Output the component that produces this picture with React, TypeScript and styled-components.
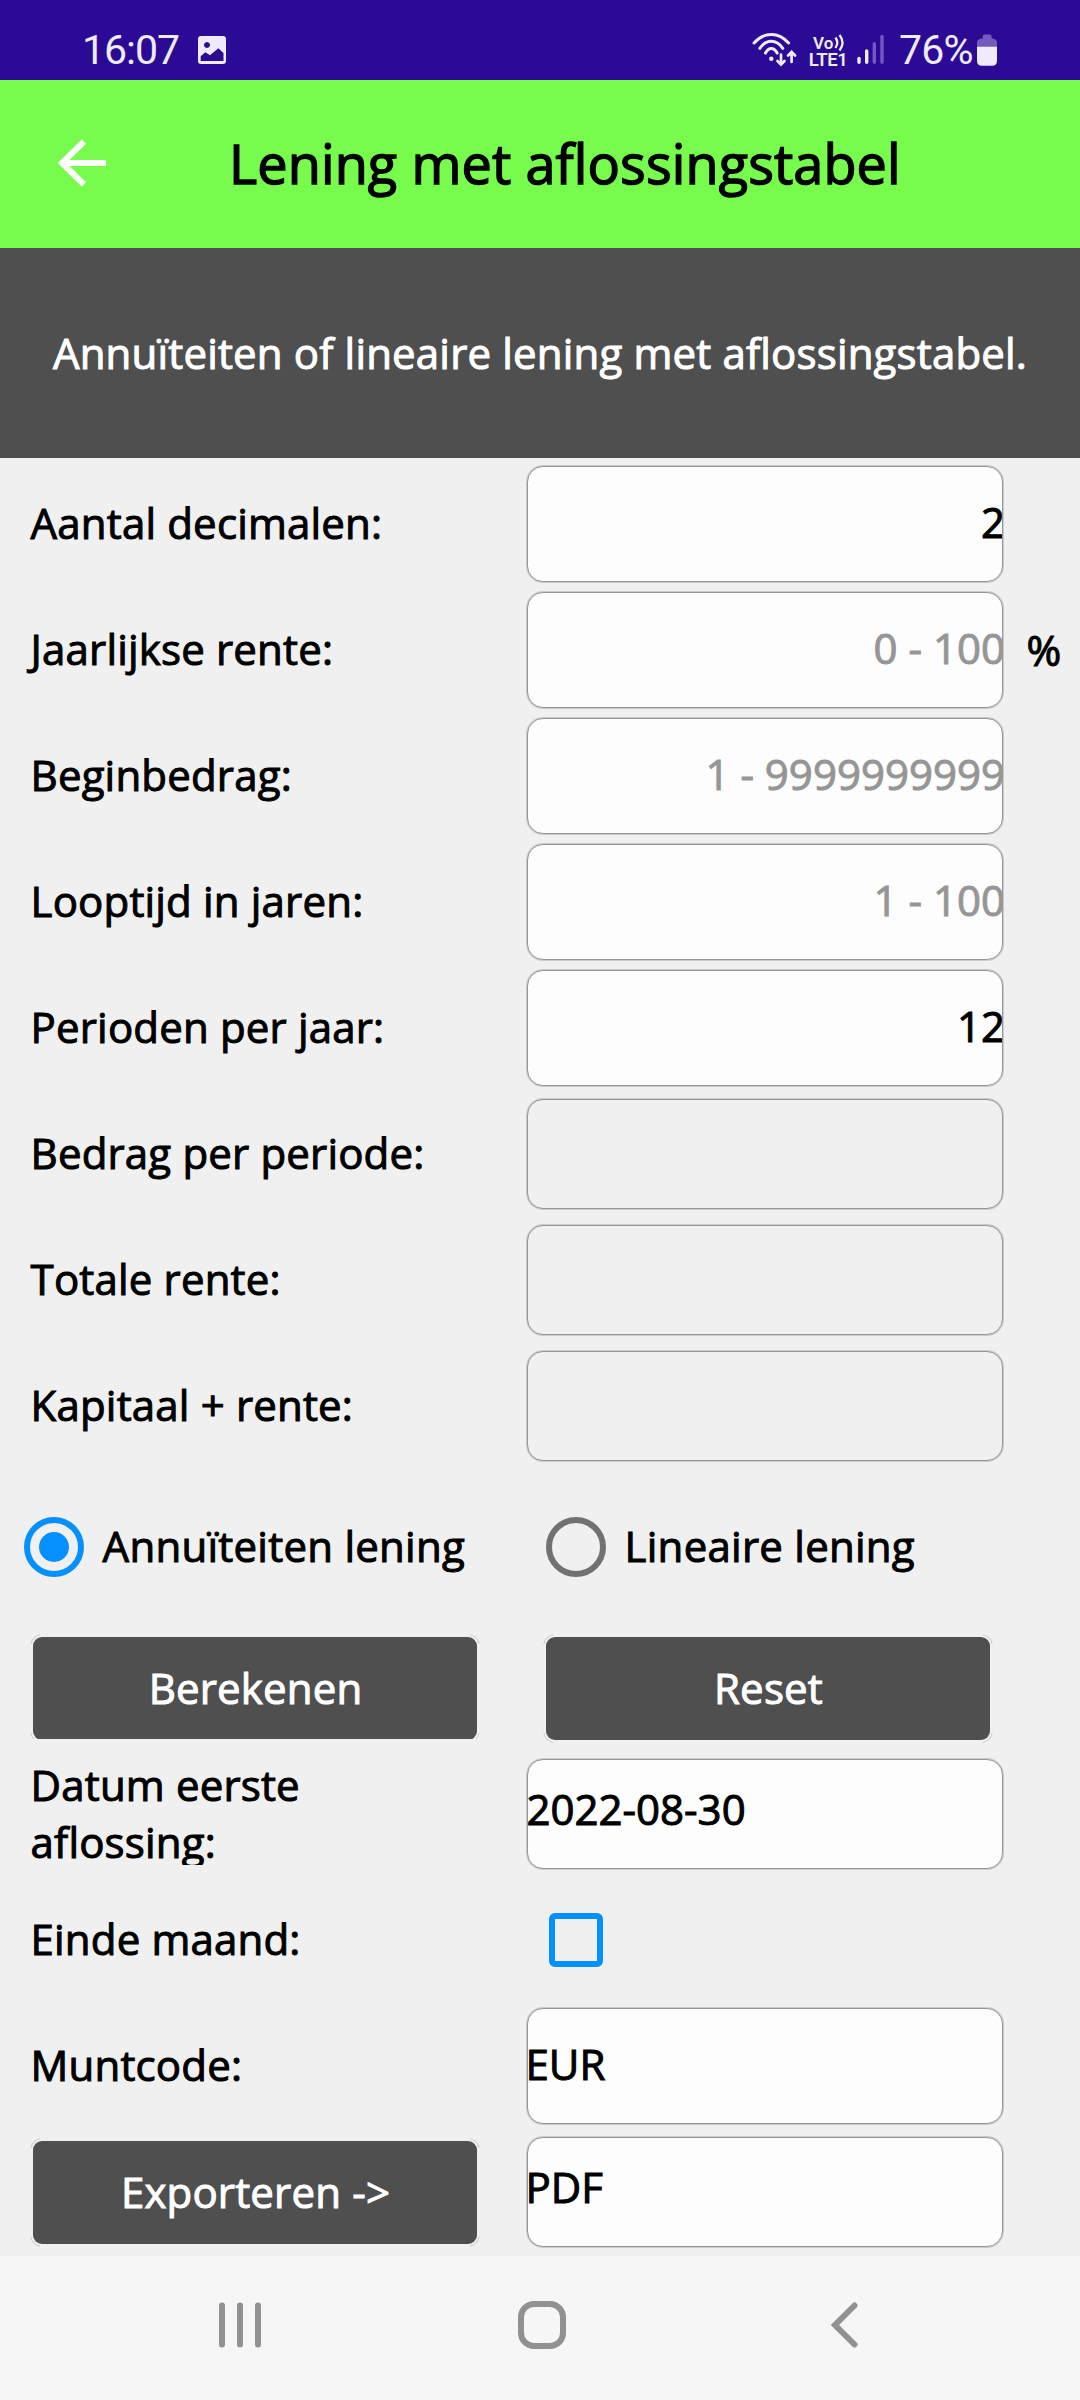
import React from "react";
import styled, { createGlobalStyle } from "styled-components";

const Global = createGlobalStyle`
  * { box-sizing: border-box; }
  html, body { margin: 0; padding: 0; background: #f0f0f0; }
  body { font-family: "Open Sans", "Noto Sans", sans-serif; color: #000; }
`;

const Screen = styled.div`
  width: 1080px;
  height: 2400px;
  display: flex;
  flex-direction: column;
  background: #f0f0f0;
  font-size: 42px;
  line-height: 57px;
  letter-spacing: 0.17px;
  -webkit-text-stroke: 1px currentColor;
  overflow: hidden;
`;

const StatusBar = styled.div`
  height: 80px;
  flex: none;
  background: #2b0a95;
  display: flex;
  align-items: flex-start;
  padding: 0 82px;
  font-family: Roboto, sans-serif;
  font-size: 41px;
  line-height: 48px;
  letter-spacing: 0;
  color: #efebfa;
  -webkit-text-stroke: 0;
`;
const Clock = styled.div`
  width: 116px;
  padding-top: 26px;
  letter-spacing: -1px;
  white-space: nowrap;
`;
const StatusRight = styled.div`
  margin-left: auto;
  display: flex;
`;
const Percent = styled.div`
  padding-top: 26px;
  margin-left: 13px;
  width: 77px;
  letter-spacing: -0.8px;
  white-space: nowrap;
`;
const Glyph = styled.svg<{ $l?: number; $t?: number }>`
  display: block;
  flex: none;
  margin-left: ${(p) => p.$l ?? 0}px;
  margin-top: ${(p) => p.$t ?? 0}px;
`;

const Header = styled.div`
  height: 168px;
  flex: none;
  background: #77fc4e;
  display: flex;
`;
const BackIcon = styled.svg`
  flex: none;
  display: block;
  margin: 59px 121px 0 53px;
`;
const Title = styled.div`
  font-size: 54px;
  line-height: 76px;
  padding-top: 45px;
  margin-left: 2px;
  letter-spacing: 0.1px;
  -webkit-text-stroke-width: 1.4px;
  white-space: nowrap;
`;

const Banner = styled.div`
  height: 210px;
  flex: none;
  background: #4f4f4f;
  color: #fff;
  text-align: center;
  padding-top: 76px;
  white-space: nowrap;
`;

const Form = styled.div`
  flex: none;
  height: 1798px;
  padding-top: 3px;
  display: flex;
  flex-direction: column;
`;
const Row = styled.div<{ $h?: number }>`
  height: ${(p) => p.$h ?? 126}px;
  flex: none;
  display: grid;
  grid-template-columns: 526px 478px 1fr;
  align-items: start;
`;
const Label = styled.div<{ $t?: number; $two?: boolean }>`
  margin-left: 30.6px;
  margin-top: ${(p) => p.$t ?? 33}px;
  width: 360px;
  white-space: ${(p) => (p.$two ? "normal" : "nowrap")};
  ${(p) => p.$two && "height: 109px; overflow: hidden;"}
`;
const Field = styled.div<{ $t: number; $h: number; $align?: string; $muted?: boolean; $off?: boolean; $pt?: number }>`
  margin-top: ${(p) => p.$t}px;
  margin-left: 1px;
  width: 476px;
  height: ${(p) => p.$h}px;
  border: 1px solid #969696;
  box-shadow: 0 0 0 1px rgba(150, 150, 150, 0.4);
  border-radius: 16px;
  background: ${(p) => (p.$off ? "#f0f0f0" : "#fdfdfd")};
  color: ${(p) => (p.$muted ? "#969696" : "#000")};
  text-align: ${(p) => p.$align ?? "right"};
  letter-spacing: 0;
  padding-top: ${(p) => p.$pt ?? 26}px;
  overflow: hidden;
  white-space: nowrap;
`;
const Value = styled.span<{ $x: number }>`
  display: inline-block;
  margin: 0 ${(p) => p.$x}px;
`;
const Unit = styled.div`
  margin: 34px 0 0 22.6px;
`;

const Choices = styled.div`
  height: 165px;
  flex: none;
  display: grid;
  grid-template-columns: 522px 1fr;
  padding: 48px 0 0 24px;
`;
const Choice = styled.div`
  display: flex;
  gap: 18.6px;
  letter-spacing: 0.25px;
  white-space: nowrap;
`;
const Radio = styled.span<{ $on?: boolean }>`
  width: 60px;
  height: 60px;
  border-radius: 50%;
  border: 6px solid ${(p) => (p.$on ? "#0590ff" : "#717171")};
  display: grid;
  place-items: center;
  &::after {
    content: "";
    width: 30px;
    height: 30px;
    border-radius: 50%;
    background: ${(p) => (p.$on ? "#0590ff" : "transparent")};
  }
`;
const Button = styled.div<{ $l: number; $t?: number; $clip?: boolean }>`
  position: relative;
  width: 444px;
  height: 103px;
  margin-left: ${(p) => p.$l}px;
  margin-top: ${(p) => p.$t ?? 3}px;
  border-radius: 9px;
  background: #4f4f4f;
  color: #fff;
  text-align: center;
  padding: 22px 0 0 1px;
  white-space: nowrap;
  ${(p) => p.$clip && "clip-path: inset(-3px -3px 1px -3px);"}

  &::before {
    content: "";
    position: absolute;
    inset: -3px;
    border: 1px solid #c4c4c4;
    border-radius: 12px;
    --dot: linear-gradient(#000 0 0);
    mask: var(--dot) 0 0, var(--dot) 100% 0, var(--dot) 0 100%, var(--dot) 100% 100%;
    mask-size: 10px 10px;
    mask-repeat: no-repeat;
  }
`;
const Check = styled.div`
  width: 54px;
  height: 54px;
  margin: 34px 0 0 23px;
  border: 6px solid #0590ff;
  border-radius: 6px;
`;

const NavBar = styled.div`
  flex: 1;
  background: #f6f6f6;
  display: flex;
  align-items: flex-start;
  padding: 45px 0 0 219px;
`;

const inputs: [string, string, boolean, string?][] = [
  ["Aantal decimalen:", "2", false],
  ["Jaarlijkse rente:", "0 - 100", true, "%"],
  ["Beginbedrag:", "1 - 9999999999", true],
  ["Looptijd in jaren:", "1 - 100", true],
  ["Perioden per jaar:", "12", false],
];
const outputs = ["Bedrag per periode:", "Totale rente:", "Kapitaal + rente:"];

export default function App() {
  return (
    <Screen>
      <Global />
      <StatusBar>
        <Clock>16:07</Clock>
        <Glyph $t={36} width="28" height="28" viewBox="0 0 28 28">
          <path fill="#efebfa" fillRule="evenodd" d="M3 0h22q3 0 3 3v22q0 3-3 3H3q-3 0-3-3V3q0-3 3-3zM9 6a3 3 0 1 0 .01 0zM2.700 25h22.800v-8l-5.200-4.800-8.300 7-4.700-2.900-4.600 4z" />
        </Glyph>
        <StatusRight>
          <Glyph width="46" height="80" viewBox="752 0 46 80" fill="none" stroke="#efebfa" strokeLinecap="round">
            <path strokeWidth="3" d="M754 43q7.500-8.500 17.300-8.500t17.300 8.500M759.800 48.300q5-7 11.500-7t11.500 7M765.500 53q2.500-4.500 5.800-4.500t5.800 4.500" />
            <circle cx="771.300" cy="58.700" r="2.200" fill="#efebfa" stroke="none" />
            <path strokeWidth="2.700" d="M781 54.500v9.500M777.500 61l3.500 3.500 3.500-3.500M791.600 62v-9.500M788.100 55.500l3.500-3.500 3.500 3.500" />
          </Glyph>
          <Glyph $l={10} width="40" height="80" viewBox="808 0 40 80" fill="#efebfa">
            <text x="813" y="48.500" fontFamily="Roboto" fontWeight="600" fontSize="17">Vo</text>
            <text x="808.800" y="65.500" fontFamily="Roboto" fontWeight="600" fontSize="18.500" textLength="39">LTE1</text>
            <path fill="none" stroke="#efebfa" strokeWidth="2.300" d="M835.500 37.500q3.500 5 0 10.500M839.500 35q6 7.500 0 15.500" />
          </Glyph>
          <Glyph $l={8} width="30" height="80" viewBox="856 0 30 80" strokeLinecap="round" strokeWidth="3.400">
            <path stroke="#efebfa" d="M859 58.400v3.900M866.700 51v11.300" />
            <path stroke="#7358c4" d="M874.300 43.700v18.600M882 36.400v25.900" />
          </Glyph>
          <Percent>76%</Percent>
          <Glyph width="22" height="80" viewBox="977 0 22 80">
            <path fill="#765cba" d="M978 47v-4q0-4.500 5.700-4.500v-2q0-2 2-2h5q2 0 2 2v2q5.300 0 5.300 4.500v4z" />
            <path fill="#efebfa" d="M978 46.700h20v14q0 5-5 5h-10q-5 0-5-5z" />
          </Glyph>
        </StatusRight>
      </StatusBar>
      <Header>
        <BackIcon width="53" height="49" viewBox="0 0 53 49" fill="none" stroke="#fff" strokeWidth="6">
          <path d="M31 2.500 9 24l22 21.500M9 24h44" />
        </BackIcon>
        <Title>Lening met aflossingstabel</Title>
      </Header>
      <Banner>Annuïteiten of lineaire lening met aflossingstabel.</Banner>
      <Form>
        {inputs.map(([label, value, muted, unit]) => (
          <Row key={label}>
            <Label>{label}</Label>
            <Field $t={5} $h={116} $muted={muted}>
              <Value $x={-3}>{value}</Value>
            </Field>
            {unit && <Unit>{unit}</Unit>}
          </Row>
        ))}
        {outputs.map((label) => (
          <Row key={label}>
            <Label>{label}</Label>
            <Field $t={8} $h={110} $off />
          </Row>
        ))}
        <Choices>
          <Choice><Radio $on />Annuïteiten lening</Choice>
          <Choice><Radio />Lineaire lening</Choice>
        </Choices>
        <Row $h={121}>
          <Button $l={33} $clip>Berekenen</Button>
          <Button $l={20}>Reset</Button>
        </Row>
        <Row $h={124}>
          <Label $two $t={1}>Datum eerste aflossing:</Label>
          <Field $t={4} $h={110} $align="left" $pt={20}><Value $x={-1.5}>2022-08-30</Value></Field>
        </Row>
        <Row>
          <Label $t={31}>Einde maand:</Label>
          <Check />
        </Row>
        <Row>
          <Label $t={31}>Muntcode:</Label>
          <Field $t={3} $h={116} $align="left"><Value $x={-2.5}>EUR</Value></Field>
        </Row>
        <Row $h={120}>
          <Button $l={33} $t={10}>Exporteren -&gt;</Button>
          <Field $t={6} $h={110} $align="left" $pt={20}><Value $x={-2.5}>PDF</Value></Field>
        </Row>
      </Form>
      <NavBar>
        <Glyph width="42" height="48" viewBox="0 0 42 48" stroke="#919191" strokeWidth="6" strokeLinecap="round">
          <path d="M3 4.500v39M21 4.500v39M39 4.500v39" />
        </Glyph>
        <Glyph $l={257} width="48" height="48" viewBox="0 0 48 48" fill="none" stroke="#919191" strokeWidth="6">
          <rect x="3" y="3" width="42" height="42" rx="13" />
        </Glyph>
        <Glyph $l={265} width="28" height="48" viewBox="0 0 28 48" fill="none" stroke="#919191" strokeWidth="6" strokeLinecap="round">
          <path d="M23.500 4.500 4 24l19.500 19.500" />
        </Glyph>
      </NavBar>
    </Screen>
  );
}
